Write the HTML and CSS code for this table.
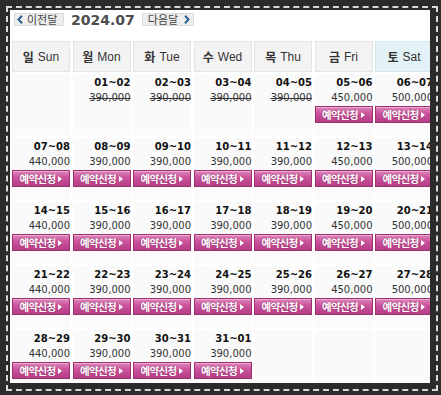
FILE: index.html
```html
<!DOCTYPE html>
<html lang="ko">
<head>
<meta charset="utf-8">
<link rel="stylesheet" href="styles.css">
</head>
<body>
<div class="frame">
  <div class="inner">
    <div class="topbar">
      <a class="navbtn prev"><svg class="arr" width="6" height="9" viewBox="0 0 6 9"><polyline points="5,0.8 1.5,4.5 5,8.2" fill="none" stroke="#2f5f95" stroke-width="2"/></svg>이전달</a>
      <span class="title">2024.07</span>
      <a class="navbtn next">다음달<svg class="arr" width="6" height="9" viewBox="0 0 6 9"><polyline points="1,0.8 4.5,4.5 1,8.2" fill="none" stroke="#2f5f95" stroke-width="2"/></svg></a>
    </div>
    <div class="cal">
      <div class="hd">일 <span>Sun</span></div>
      <div class="hd">월 <span>Mon</span></div>
      <div class="hd">화 <span>Tue</span></div>
      <div class="hd">수 <span>Wed</span></div>
      <div class="hd">목 <span>Thu</span></div>
      <div class="hd">금 <span>Fri</span></div>
      <div class="hd sat">토 <span>Sat</span></div>

      <div class="cell"></div>
      <div class="cell"><div class="d">01~02</div><div class="p past">390,000</div></div>
      <div class="cell"><div class="d">02~03</div><div class="p past">390,000</div></div>
      <div class="cell"><div class="d">03~04</div><div class="p past">390,000</div></div>
      <div class="cell"><div class="d">04~05</div><div class="p past">390,000</div></div>
      <div class="cell"><div class="d">05~06</div><div class="p">450,000</div><a class="btn">예약신청</a></div>
      <div class="cell"><div class="d">06~07</div><div class="p">500,000</div><a class="btn">예약신청</a></div>

      <div class="cell"><div class="d">07~08</div><div class="p">440,000</div><a class="btn">예약신청</a></div>
      <div class="cell"><div class="d">08~09</div><div class="p">390,000</div><a class="btn">예약신청</a></div>
      <div class="cell"><div class="d">09~10</div><div class="p">390,000</div><a class="btn">예약신청</a></div>
      <div class="cell"><div class="d">10~11</div><div class="p">390,000</div><a class="btn">예약신청</a></div>
      <div class="cell"><div class="d">11~12</div><div class="p">390,000</div><a class="btn">예약신청</a></div>
      <div class="cell"><div class="d">12~13</div><div class="p">450,000</div><a class="btn">예약신청</a></div>
      <div class="cell"><div class="d">13~14</div><div class="p">500,000</div><a class="btn">예약신청</a></div>

      <div class="cell"><div class="d">14~15</div><div class="p">440,000</div><a class="btn">예약신청</a></div>
      <div class="cell"><div class="d">15~16</div><div class="p">390,000</div><a class="btn">예약신청</a></div>
      <div class="cell"><div class="d">16~17</div><div class="p">390,000</div><a class="btn">예약신청</a></div>
      <div class="cell"><div class="d">17~18</div><div class="p">390,000</div><a class="btn">예약신청</a></div>
      <div class="cell"><div class="d">18~19</div><div class="p">390,000</div><a class="btn">예약신청</a></div>
      <div class="cell"><div class="d">19~20</div><div class="p">450,000</div><a class="btn">예약신청</a></div>
      <div class="cell"><div class="d">20~21</div><div class="p">500,000</div><a class="btn">예약신청</a></div>

      <div class="cell"><div class="d">21~22</div><div class="p">440,000</div><a class="btn">예약신청</a></div>
      <div class="cell"><div class="d">22~23</div><div class="p">390,000</div><a class="btn">예약신청</a></div>
      <div class="cell"><div class="d">23~24</div><div class="p">390,000</div><a class="btn">예약신청</a></div>
      <div class="cell"><div class="d">24~25</div><div class="p">390,000</div><a class="btn">예약신청</a></div>
      <div class="cell"><div class="d">25~26</div><div class="p">390,000</div><a class="btn">예약신청</a></div>
      <div class="cell"><div class="d">26~27</div><div class="p">450,000</div><a class="btn">예약신청</a></div>
      <div class="cell"><div class="d">27~28</div><div class="p">500,000</div><a class="btn">예약신청</a></div>

      <div class="cell"><div class="d">28~29</div><div class="p">440,000</div><a class="btn">예약신청</a></div>
      <div class="cell"><div class="d">29~30</div><div class="p">390,000</div><a class="btn">예약신청</a></div>
      <div class="cell"><div class="d">30~31</div><div class="p">390,000</div><a class="btn">예약신청</a></div>
      <div class="cell"><div class="d">31~01</div><div class="p">390,000</div><a class="btn">예약신청</a></div>
      <div class="cell"></div>
      <div class="cell"></div>
      <div class="cell"></div>
    </div>
  </div>
</div>
</body>
</html>
```

FILE: styles.css
```css
html, body {
  margin: 0;
  padding: 0;
}
body {
  background: #2b2b2b;
  width: 441px;
  height: 395px;
  overflow: hidden;
  font-family: "DejaVu Sans", Verdana, sans-serif;
}
.frame {
  margin: 6px 0 0 6px;
  width: 424px;
  height: 375px;
  border: 2px dashed #d8d8d8;
  padding: 2px 2px 4px 2px;
}
.inner {
  background: #fff;
  width: 420px;
  height: 373px;
  overflow: hidden;
  padding-left: 2px;
  box-sizing: border-box;
}
.topbar {
  display: flex;
  align-items: center;
  height: 16px;
  padding-top: 1px;
  padding-left: 2px;
}
.navbtn {
  display: flex;
  align-items: center;
  height: 13px;
  box-sizing: border-box;
  background: #eeeeee;
  border: 1px solid #dcdcdc;
  font-family: "Noto Sans CJK KR", sans-serif;
  font-size: 11px;
  color: #444;
  line-height: 1;
}
.navbtn.prev {
  width: 50px;
  padding-left: 2px;
}
.navbtn.next {
  width: 52px;
  padding-left: 5px;
}
.arr {
  display: block;
  margin-right: 4px;
}
.next .arr {
  margin: 0 0 0 6px;
}
.title {
  font-weight: bold;
  font-size: 14px;
  color: #4d4d4d;
  margin: 0 7px 0 7px;
  line-height: 16px;
  padding-top: 1px;
}
.cal {
  display: grid;
  grid-template-columns: repeat(7, 58px);
  grid-auto-rows: 61px;
  grid-template-rows: 30px;
  column-gap: 2.5px;
  row-gap: 3px;
  margin-top: 14px;
  width: 430px;
}
.hd {
  background: #f3f3f3;
  border: 1px solid #e4e4e4;
  box-sizing: border-box;
  display: flex;
  align-items: center;
  justify-content: center;
  font-family: "Noto Sans CJK KR", sans-serif;
  font-weight: bold;
  font-size: 12px;
  color: #333;
  margin-bottom: -1px;
}
.hd span {
  font-family: "Liberation Sans", Arial, sans-serif;
  font-weight: normal;
  margin-left: 4px;
}
.hd.sat {
  background: #e3f2f6;
  border-color: #d3e6ec;
}
.cell {
  background: #fafafa;
  display: flex;
  flex-direction: column;
  align-items: flex-end;
  padding-top: 2px;
}
.d {
  font-weight: bold;
  font-size: 10px;
  color: #111;
  line-height: 14px;
}
.p {
  font-size: 10px;
  color: #333;
  line-height: 14px;
  margin-top: 1px;
}
.p.past {
  text-decoration: line-through;
}
.btn {
  display: flex;
  align-items: center;
  justify-content: center;
  width: 58px;
  height: 17px;
  box-sizing: border-box;
  background: linear-gradient(#e084bb, #c9519a 45%, #b53d85);
  border: 1px solid #9e3070;
  box-shadow: inset 0 1px 0 rgba(255,255,255,0.35);
  font-family: "Noto Sans CJK KR", sans-serif;
  font-weight: bold;
  font-size: 10.5px;
  letter-spacing: -0.7px;
  color: #fff;
  text-shadow: 0 0 1px #7d1f55;
  margin-top: 1px;
}
.btn::after {
  content: "";
  border-left: 4px solid #fff;
  border-top: 3.5px solid transparent;
  border-bottom: 3.5px solid transparent;
  margin-left: 3px;
}
```
